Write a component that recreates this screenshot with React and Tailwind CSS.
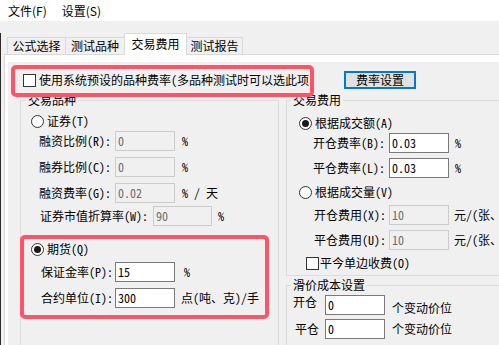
import React from "react";

const FONT = "font-['Noto_Sans_Mono_CJK_SC','Noto_Sans_CJK_SC',sans-serif]";

function Radio({ checked }) {
  return (
    <span className="w-[13px] h-[13px] rounded-full border border-[#333333] bg-white flex items-center justify-center shrink-0">
      {checked && <span className="w-[7px] h-[7px] rounded-full bg-[#1a1a1a]" />}
    </span>
  );
}

function Check() {
  return <span className="block w-[13px] h-[13px] border border-[#333333] bg-white shrink-0" />;
}

function Input({ value, disabled, w = "w-[60px]" }) {
  return (
    <div
      className={
        w +
        " h-[20px] shrink-0 flex items-center pl-[2px] border " +
        (disabled
          ? "bg-[#f0f0f0] border-[#cccccc] text-[#6d6d6d]"
          : "bg-white border-[#7a7a7a] text-black")
      }
    >
      {value}
    </div>
  );
}

export default function App() {
  return (
    <div className={"relative w-[499px] h-[345px] overflow-hidden bg-[#f0f0f0] text-[12px] leading-[14px] text-black " + FONT}>
      {/* menu */}
      <div className="h-[21px] bg-white flex pt-[3px] leading-[16px] font-['Noto_Sans_CJK_SC',sans-serif]">
        <span className="ml-[8px]">文件(F)</span>
        <span className="ml-[15px]">设置(S)</span>
      </div>

      <div className="border-l border-[#2b2b2b] h-[324px]">
        {/* tabs */}
        <div className="flex items-end h-[21px] mt-[12px] ml-[6px]">
          <div className="w-[58px] h-[17px] border-t border-l border-[#d9d9d9] flex items-center justify-center">公式选择</div>
          <div className="w-[59px] h-[17px] border-t border-l border-[#d9d9d9] flex items-center justify-center">测试品种</div>
          <div className="relative z-10 w-[63px] h-[22px] -mb-px bg-white border-t border-l border-r border-[#d9d9d9] flex items-center justify-center pb-[1px]">交易费用</div>
          <div className="w-[56px] h-[17px] border-t border-r border-[#d9d9d9] flex items-center justify-center">测试报告</div>
        </div>

        {/* panel */}
        <div className="ml-[3px] border-t border-l border-[#d9d9d9] bg-white h-[300px] pl-[3px] pt-[7px]">
          <div className="bg-[#f0f0f0] h-[300px]">
            {/* row 1 */}
            <div className="flex items-center pt-[9px] h-[27px]">
              <div className="w-[336px] flex items-center">
                <span className="ml-[15px]"><Check /></span>
                <span className="ml-[3px] whitespace-nowrap">使用系统预设的品种费率(多品种测试时可以选此项</span>
              </div>
              <div className="w-[72px] h-[18px] border-2 border-[#0078d7] bg-[#e1e1e1] flex items-center justify-center">费率设置</div>
            </div>

            {/* groups */}
            <div className="flex mt-[4px]">
              {/* left group */}
              <fieldset className="ml-[12px] w-[259px] h-[260px] border border-[#dcdcdc] p-0 m-0 shrink-0">
                <legend className="ml-[5px] px-[2px] leading-[14px]">交易品种</legend>
                <div className="flex items-center mt-[7px] h-[14px]">
                  <span className="ml-[10px]"><Radio /></span>
                  <span className="ml-[3px]">证券(T)</span>
                </div>
                <div className="flex items-center mt-[3px] h-[20px]">
                  <span className="ml-[18px] w-[76px]">融资比例(R):</span>
                  <Input value="0" disabled />
                  <span className="ml-[7px]">%</span>
                </div>
                <div className="flex items-center mt-[6px] h-[20px]">
                  <span className="ml-[18px] w-[76px]">融券比例(C):</span>
                  <Input value="0" disabled />
                  <span className="ml-[7px]">%</span>
                </div>
                <div className="flex items-center mt-[6px] h-[20px]">
                  <span className="ml-[18px] w-[76px]">融资费率(G):</span>
                  <Input value="0.02" disabled />
                  <span className="ml-[7px] whitespace-pre">% / 天</span>
                </div>
                <div className="flex items-center mt-[3px] h-[20px]">
                  <span className="ml-[19px] w-[113px] whitespace-nowrap">证券市值折算率(W):</span>
                  <Input value="90" disabled w="w-[59px]" />
                  <span className="ml-[6px]">%</span>
                </div>
                <div className="flex items-center mt-[16px] h-[14px]">
                  <span className="ml-[10px]"><Radio checked /></span>
                  <span className="ml-[3px]">期货(Q)</span>
                </div>
                <div className="flex items-center mt-[6px] h-[20px]">
                  <span className="ml-[20px] w-[74px]">保证金率(P):</span>
                  <Input value="15" />
                  <span className="ml-[9px]">%</span>
                </div>
                <div className="flex items-center mt-[6px] h-[20px]">
                  <span className="ml-[20px] w-[74px]">合约单位(I):</span>
                  <Input value="300" />
                  <span className="ml-[6px] whitespace-nowrap">点(吨、克)/手</span>
                </div>
              </fieldset>

              {/* right column */}
              <div className="ml-[7px] shrink-0 w-[260px]">
                <fieldset className="w-[260px] h-[183px] border border-[#dcdcdc] p-0 m-0">
                  <legend className="ml-[4px] px-[2px] leading-[14px]">交易费用</legend>
                  <div className="flex items-center mt-[9px] h-[14px]">
                    <span className="ml-[12px]"><Radio checked /></span>
                    <span className="ml-[3px]">根据成交额(A)</span>
                  </div>
                  <div className="flex items-center mt-[3px] h-[20px]">
                    <span className="ml-[26px] w-[76px]">开仓费率(B):</span>
                    <Input value="0.03" />
                    <span className="ml-[6px]">%</span>
                  </div>
                  <div className="flex items-center mt-[5px] h-[20px]">
                    <span className="ml-[26px] w-[76px]">平仓费率(L):</span>
                    <Input value="0.03" />
                    <span className="ml-[6px]">%</span>
                  </div>
                  <div className="flex items-center mt-[7px] h-[14px]">
                    <span className="ml-[12px]"><Radio /></span>
                    <span className="ml-[3px]">根据成交量(V)</span>
                  </div>
                  <div className="flex items-center mt-[6px] h-[20px]">
                    <span className="ml-[27px] w-[75px]">开仓费用(X):</span>
                    <Input value="10" disabled />
                    <span className="ml-[5px] whitespace-nowrap">元/(张、手)</span>
                  </div>
                  <div className="flex items-center mt-[5px] h-[20px]">
                    <span className="ml-[27px] w-[75px]">平仓费用(U):</span>
                    <Input value="10" disabled />
                    <span className="ml-[5px] whitespace-nowrap">元/(张、手)</span>
                  </div>
                  <div className="flex items-center mt-[6px] h-[14px]">
                    <span className="ml-[19px]"><Check /></span>
                    <span className="ml-[1px]">平今单边收费(O)</span>
                  </div>
                </fieldset>

                <fieldset className="mt-[2px] w-[260px] h-[100px] border border-[#dcdcdc] p-0 m-0">
                  <legend className="ml-[4px] px-[2px] leading-[14px]">滑价成本设置</legend>
                  <div className="flex items-start mt-[3px] h-[20px]">
                    <span className="ml-[6px] w-[32px]">开仓</span>
                    <Input value="0" />
                    <span className="ml-[7px] mt-[6px]">个变动价位</span>
                  </div>
                  <div className="flex items-center mt-[4px] h-[20px]">
                    <span className="ml-[8px] w-[30px]">平仓</span>
                    <Input value="0" />
                    <span className="ml-[7px]">个变动价位</span>
                  </div>
                </fieldset>
              </div>
            </div>
          </div>
        </div>
      </div>

      {/* annotation overlays */}
      <div className="absolute left-[11px] top-[65px] w-[303px] h-[32px] border-4 border-[#ff5468] rounded-[5px] pointer-events-none" />
      <div className="absolute left-[20px] top-[235px] w-[249px] h-[84px] border-4 border-[#ff5468] rounded-[5px] pointer-events-none" />
    </div>
  );
}
